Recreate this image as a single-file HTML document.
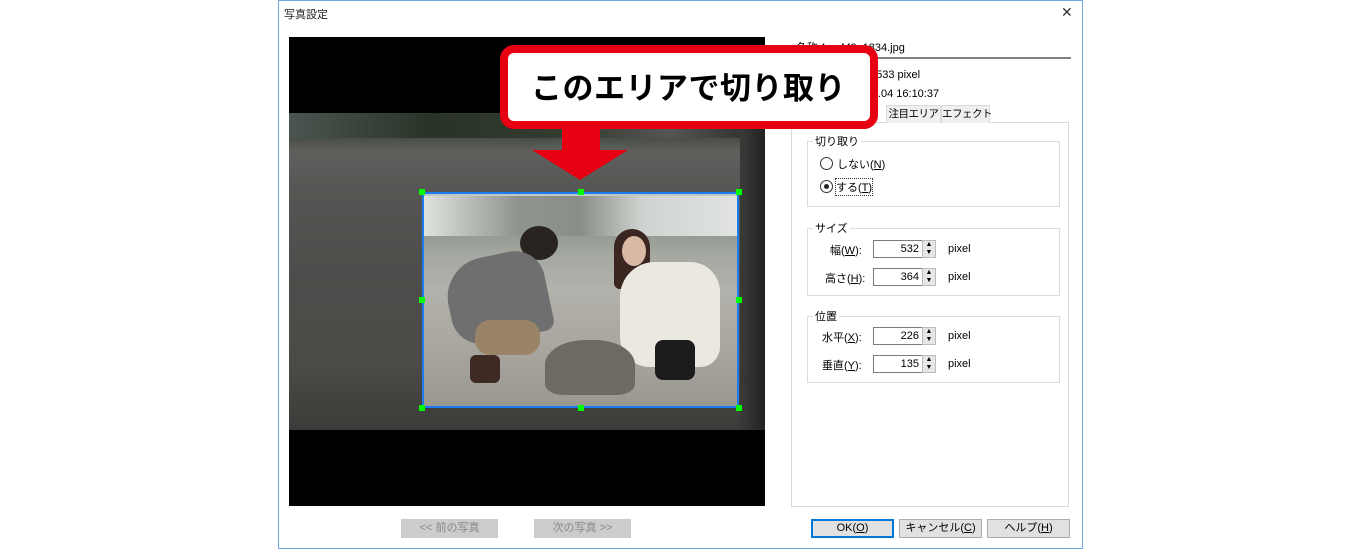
<!DOCTYPE html>
<html><head><meta charset="utf-8"><style>
*{margin:0;padding:0;box-sizing:border-box}
body{width:1360px;height:551px;background:#fff;position:relative;overflow:hidden;font-family:"Liberation Sans","Noto Sans CJK JP",sans-serif;font-size:12px;color:#000}
.a{position:absolute;white-space:nowrap}
.win{left:278px;top:0;width:805px;height:549px;border:1px solid #6fa8dc;background:#fff}
.grp{border:1px solid #dcdcdc}
.lg{background:#fff;padding:0 2px;font-size:11px}
.inp{width:50px;height:18px;border:1px solid #7a7a7a;background:#fff;text-align:right;padding-right:3px;font-size:11px;line-height:16px}
.sp{width:14px;height:18px;background:#e6e6e6;border:1px solid #bbb;font-size:7px;line-height:8px;text-align:center}
.btn{height:19px;border:1px solid #adadad;background:#e1e1e1;text-align:center;font-size:11px;line-height:17px}
.dis{background:#ccc;border-color:#ccc;color:#888}
.px{font-size:11px}
</style></head><body>
<div class="a win"></div>
<div class="a" style="left:284px;top:6px;font-size:11px;color:#222">写真設定</div>
<div class="a" style="left:1061px;top:4px;font-size:14px;color:#333">✕</div>

<!-- photo -->
<div class="a" style="left:289px;top:37px;width:476px;height:469px;background:#000"></div>
<div class="a" style="left:289px;top:113px;width:476px;height:317px;background:linear-gradient(180deg,#3d4439 0%,#4a4d48 8%,#5f605d 12%,#555653 25%,#4d4e4b 50%,#4a4a47 80%,#3b3b39 100%)"></div>
<div class="a" style="left:289px;top:113px;width:476px;height:25px;background:linear-gradient(90deg,#4a5550,#2a3327 30%,#333d30 60%,#555 80%,#2a2a2a 100%)"></div>
<div class="a" style="left:740px;top:113px;width:25px;height:317px;background:linear-gradient(90deg,#3a3a38,#222)"></div>
<!-- selection inner -->
<div class="a" style="left:422px;top:192px;width:317px;height:216px;background:linear-gradient(180deg,#c9cdc9 0%,#8e938c 15%,#a5a9a2 30%,#b2b1ab 45%,#aaa7a0 70%,#9a9690 100%)"></div>
<div class="a" style="left:424px;top:196px;width:313px;height:40px;background:linear-gradient(90deg,#dfe3df,#8f948e 30%,#8a8f88 50%,#d0d4d0 70%,#e0e3e0)"></div>
<!-- man -->
<div class="a" style="left:520px;top:226px;width:38px;height:34px;border-radius:50%;background:#2a2420"></div>
<div class="a" style="left:448px;top:255px;width:100px;height:85px;background:#6e6f6e;border-radius:40px 30px 10px 30px;transform:rotate(-12deg)"></div>
<div class="a" style="left:475px;top:320px;width:65px;height:35px;background:#9a8468;border-radius:15px"></div>
<div class="a" style="left:470px;top:355px;width:30px;height:28px;background:#3e2a22;border-radius:6px"></div>
<!-- woman -->
<div class="a" style="left:614px;top:229px;width:36px;height:60px;border-radius:18px 18px 6px 6px;background:#3a2520"></div>
<div class="a" style="left:622px;top:236px;width:24px;height:30px;border-radius:50%;background:#d9b9a5"></div>
<div class="a" style="left:620px;top:262px;width:100px;height:105px;background:#ebe8e0;border-radius:35px 30px 20px 30px"></div>
<div class="a" style="left:655px;top:340px;width:40px;height:40px;background:#1c1c1c;border-radius:8px"></div>
<!-- sand -->
<div class="a" style="left:545px;top:340px;width:90px;height:55px;background:#6e6a62;border-radius:45% 45% 20% 20%"></div>
<div class="a" style="left:422px;top:192px;width:317px;height:216px;border:2px solid #1a7cf0"></div>
<div class="a" style="left:419px;top:189px;width:6px;height:6px;background:#0f0"></div>
<div class="a" style="left:578px;top:189px;width:6px;height:6px;background:#0f0"></div>
<div class="a" style="left:736px;top:189px;width:6px;height:6px;background:#0f0"></div>
<div class="a" style="left:419px;top:297px;width:6px;height:6px;background:#0f0"></div>
<div class="a" style="left:736px;top:297px;width:6px;height:6px;background:#0f0"></div>
<div class="a" style="left:419px;top:405px;width:6px;height:6px;background:#0f0"></div>
<div class="a" style="left:578px;top:405px;width:6px;height:6px;background:#0f0"></div>
<div class="a" style="left:736px;top:405px;width:6px;height:6px;background:#0f0"></div>

<!-- right panel -->
<div class="a" style="left:796px;top:39px;font-size:11px">名称：&nbsp;&nbsp;&nbsp;&nbsp;M2_1834.jpg</div>
<div class="a" style="left:790px;top:57px;width:281px;height:2px;background:#808080"></div>
<div class="a" style="left:796px;top:66px;font-size:11px">大きさ：&nbsp;&nbsp;800 x 533 pixel</div>
<div class="a" style="left:796px;top:85px;font-size:11px">日付：&nbsp;&nbsp;&nbsp;2015.04.04 16:10:37</div>
<div class="a" style="left:791px;top:122px;width:278px;height:385px;border:1px solid #d9d9d9"></div>
<div class="a" style="left:886px;top:105px;width:55px;height:18px;border:1px solid #d9d9d9;border-bottom:none;background:#f0f0f0;font-size:10.5px;text-align:center;line-height:17px;letter-spacing:-0.5px">注目エリア</div>
<div class="a" style="left:941px;top:105px;width:49px;height:18px;border:1px solid #d9d9d9;border-bottom:none;background:#f0f0f0;font-size:10.5px;text-align:center;line-height:17px;letter-spacing:-0.5px">エフェクト</div>

<div class="a grp" style="left:807px;top:141px;width:253px;height:66px"></div>
<div class="a lg" style="left:813px;top:133px">切り取り</div>
<div class="a" style="left:820px;top:157px;width:13px;height:13px;border:1px solid #333;border-radius:50%"></div>
<div class="a" style="left:837px;top:156px;font-size:11px">しない(<u>N</u>)</div>
<div class="a" style="left:820px;top:180px;width:13px;height:13px;border:1px solid #333;border-radius:50%"></div>
<div class="a" style="left:824px;top:184px;width:5px;height:5px;background:#222;border-radius:50%"></div>
<div class="a" style="left:836px;top:179px;font-size:11px;outline:1px dotted #333">する(<u>T</u>)</div>

<div class="a grp" style="left:807px;top:228px;width:253px;height:68px"></div>
<div class="a lg" style="left:813px;top:220px">サイズ</div>
<div class="a" style="left:830px;top:242px;font-size:11px">幅(<u>W</u>):</div>
<div class="a inp" style="left:873px;top:240px">532</div><div class="a sp" style="left:922px;top:240px">▲<br>▼</div>
<div class="a px" style="left:948px;top:243px">pixel</div>
<div class="a" style="left:825px;top:270px;font-size:11px">高さ(<u>H</u>):</div>
<div class="a inp" style="left:873px;top:268px">364</div><div class="a sp" style="left:922px;top:268px">▲<br>▼</div>
<div class="a px" style="left:948px;top:271px">pixel</div>

<div class="a grp" style="left:807px;top:316px;width:253px;height:67px"></div>
<div class="a lg" style="left:813px;top:308px">位置</div>
<div class="a" style="left:822px;top:329px;font-size:11px">水平(<u>X</u>):</div>
<div class="a inp" style="left:873px;top:327px">226</div><div class="a sp" style="left:922px;top:327px">▲<br>▼</div>
<div class="a px" style="left:948px;top:330px">pixel</div>
<div class="a" style="left:822px;top:357px;font-size:11px">垂直(<u>Y</u>):</div>
<div class="a inp" style="left:873px;top:355px">135</div><div class="a sp" style="left:922px;top:355px">▲<br>▼</div>
<div class="a px" style="left:948px;top:358px">pixel</div>

<!-- buttons -->
<div class="a btn dis" style="left:401px;top:519px;width:97px">&lt;&lt; 前の写真</div>
<div class="a btn dis" style="left:534px;top:519px;width:97px">次の写真 &gt;&gt;</div>
<div class="a btn" style="left:811px;top:519px;width:83px;border:2px solid #0078d7;line-height:15px">OK(<u>O</u>)</div>
<div class="a btn" style="left:899px;top:519px;width:83px">キャンセル(<u>C</u>)</div>
<div class="a btn" style="left:987px;top:519px;width:83px">ヘルプ(<u>H</u>)</div>

<!-- callout -->
<div class="a" style="left:500px;top:45px;width:378px;height:84px;border:8px solid #e60012;border-radius:14px;background:#fff"></div>
<div class="a" style="left:531px;top:65px;font-size:31px;font-weight:bold;line-height:42px;letter-spacing:0.5px;font-family:'Noto Sans CJK JP',sans-serif">このエリアで切り取り</div>
<svg class="a" style="left:530px;top:128px" width="100" height="54"><path d="M32 0 H70 V22 H98 L50 52 L2 22 H32 Z" fill="#e60012"/></svg>
</body></html>
